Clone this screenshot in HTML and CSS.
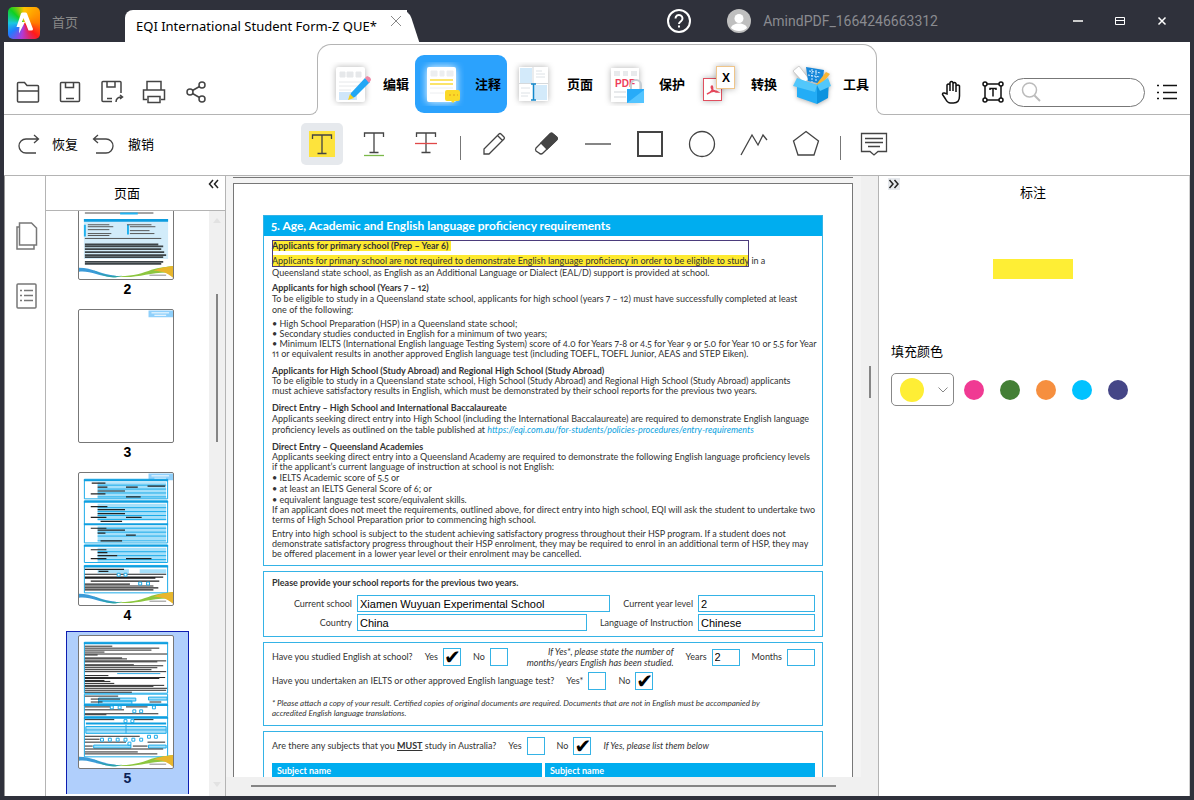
FILE: index.html
```html
<!DOCTYPE html>
<html lang="en">

<head>
    <meta charset="UTF-8">
    <meta name="viewport" content="width=device-width, initial-scale=1.0">
    <title>EQI International Student Form-Z QUE*</title>
    <link rel="stylesheet" href="styles.css">
</head>

<body>
    <!-- Title bar -->
    <header class="titlebar">
        <div class="logo">
            <svg width="32" height="32" viewBox="0 0 32 32">
                <path d="M13 6.500q.5-1 1.500-1h3q1 0 1.500 1L25 22q0 1.500-1.500 1.500h-3L15.500 11l-1.500 4h3L11 26.500l.5-6.500H8.500z" fill="#fff"/>
            </svg>
        </div>
        <button class="home">首页</button>
        <div class="tab">
            <span>EQI International Student Form-Z QUE*</span>
            <button class="tab-close" aria-label="Close tab">
                <svg width="12" height="12" viewBox="0 0 12 12"><path d="M1 1l10 10M11 1L1 11" stroke="#888"/></svg>
            </button>
        </div>
        <div class="account">
            <button aria-label="Help">
                <svg width="26" height="26" viewBox="0 0 26 26" fill="none" stroke="#fff" stroke-width="2">
                    <circle cx="13" cy="13" r="11"/>
                    <path d="M9.500 10.500a3.500 3.500 0 1 1 5.500 2.800c-1.500 1-2 1.400-2 2.700"/>
                    <path d="M13 17.500v2"/>
                </svg>
            </button>
            <svg width="24" height="24" viewBox="0 0 24 24">
                <circle cx="12" cy="12" r="12" fill="#bfbfbf"/>
                <circle cx="12" cy="9.500" r="4.500" fill="#fff"/>
                <path d="M4 19c1-6 15-6 16 0-4 4-12 4-16 0z" fill="#fff"/>
            </svg>
            <span class="user">AmindPDF_1664246663312</span>
        </div>
        <div class="window-buttons">
            <button aria-label="Minimize"><svg width="12" height="12" viewBox="0 0 12 12"><path d="M1 6h10" stroke="#ccc" stroke-width="2"/></svg></button>
            <button aria-label="Maximize"><svg width="12" height="12" viewBox="0 0 12 12"><path d="M1.500 2.500h9v7h-9zM1 5.500h10" stroke="#fff" fill="none"/></svg></button>
            <button aria-label="Close"><svg width="12" height="12" viewBox="0 0 12 12"><path d="M2.500 2.500l7 7M9.500 2.500l-7 7" stroke="#fff" stroke-width="1.500"/></svg></button>
        </div>
    </header>

    <!-- Ribbon -->
    <div class="ribbon">
        <div class="ribbon-side ribbon-left">
            <button aria-label="Open"><svg width="24" height="24" viewBox="0 0 24 24"><path d="M1.500 21V3.500q0-1 1-1h6l2.500 3h10.500q1 0 1 1V21q0 1-1 1h-19q-1 0-1-1zM1.500 11h21"/></svg></button>
            <button aria-label="Save"><svg width="24" height="24" viewBox="0 0 24 24"><path d="M3.500 2.500h17q1 0 1 1v17q0 1-1 1h-17q-1 0-1-1v-17q0-1 1-1zM7.500 2.500v5h8v-5M8 18.500h8"/></svg></button>
            <button aria-label="Save as"><svg width="24" height="24" viewBox="0 0 24 24"><path d="M12 21.500H3q-1 0-1-1v-18q0-1 1-1h17q1 0 1 1V13M7 1.500v5.500h8V1.500M7 18.500h5M16 22c0-4 2-5 6-5M20 15l2.500 2-2.500 2"/></svg></button>
            <button aria-label="Print"><svg width="24" height="24" viewBox="0 0 24 24"><path d="M5 10V1.500h14V10M5 19.500H1.500V10h21v9.500H19M6 16.500h12v6H6z"/></svg></button>
            <button aria-label="Share"><svg width="24" height="24" viewBox="0 0 24 24"><circle cx="6" cy="12" r="3"/><circle cx="18" cy="5" r="3"/><circle cx="18" cy="19" r="3"/><path d="M8.500 10.500l7-4M8.500 13.500l7 4"/></svg></button>
        </div>

        <nav class="modes">
            <button class="mode">
                <svg width="44" height="44" viewBox="0 0 44 44">
                    <rect class="sheet" x="8" y="5" width="29" height="35" rx="2"/>
                    <path d="M12 10h5v5h-5zM19 10h6v5h-6zM28 10h5v5h-5zM11 20h22M11 24h22M11 28h12" fill="#e6e8ea" stroke="#e6e8ea"/>
                    <path d="M11 30h18v8H11z" fill="#cfe6fa"/>
                    <path d="M21 37l2-6 14-15 5 4-15 15z" fill="#22a7f5"/>
                    <path d="M37 16l2-2q4 1 4 4l-2 3z" fill="#ef86a4"/>
                    <path d="M20 38l2-6 4 4z" fill="#f7cf1d"/>
                </svg>
                <span>编辑</span>
            </button>
            <button class="mode active">
                <svg width="44" height="44" viewBox="0 0 44 44">
                    <rect class="sheet glow" x="7" y="5" width="29" height="35" rx="2"/>
                    <path d="M11 9h6v5h-6zM20 9h4v5h-4zM27 9h6v5h-6zM10 26h23M10 31h14" fill="#eceef0" stroke="#eceef0"/>
                    <path d="M10 18h23M10 22h23" stroke="#fbe46a" stroke-width="2"/>
                    <path d="M27 28h11q2 0 2 2v7q0 2-2 2h-3l-2 2-2-2h-4q-2 0-2-2v-7q0-2 2-2z" fill="#fbd928"/>
                    <path d="M29 33h2M33 33h2M37 33h1" stroke="#e09a1c"/>
                </svg>
                <span>注释</span>
            </button>
            <button class="mode">
                <svg width="44" height="44" viewBox="0 0 44 44">
                    <rect class="sheet" x="7" y="5" width="29" height="34"/>
                    <path d="M8 6h12v15H8zM22 23h13v15H22z" fill="#d3eafa"/>
                    <path d="M24 12h9M24 15h9M24 9h6M9 26h9M9 31h9M9 34h7" stroke="#dde2e6"/>
                    <path d="M7 21.500h29M21 5v17" stroke="#d5d9dc"/>
                    <path d="M19 22h5M19 38h5M21.500 22v16" stroke="#1388cc" stroke-width="1.500"/>
                </svg>
                <span>页面</span>
            </button>
            <button class="mode">
                <svg width="44" height="44" viewBox="0 0 44 44">
                    <rect class="sheet" x="7" y="6" width="28" height="34"/>
                    <path d="M10 9h6v5h-6zM19 9h5v5h-5zM27 9h6v5h-6zM10 29h12v2H10zM10 34h12v2H10z" fill="#e8eaec"/>
                    <text x="11" y="25" class="pdf">PDF</text>
                    <path d="M27 28v-5a5 5 0 0 1 10 0v5" fill="none" stroke="#c4ccd2" stroke-width="2"/>
                    <rect x="23" y="27" width="17" height="14" fill="#27abf8"/>
                    <path d="M23 41l17-13v13z" fill="#53c4ff"/>
                </svg>
                <span>保护</span>
            </button>
            <button class="mode">
                <svg width="44" height="44" viewBox="0 0 44 44">
                    <rect class="sheet" x="7.500" y="16.500" width="18" height="22" stroke="#e04f5f"/>
                    <path d="M11 32c4-1 7-5 5-8-2 0 0 6 6 6-3-2-8 0-11 2z" fill="none" stroke="#e8485c" stroke-width="1.500"/>
                    <rect class="sheet" x="20.500" y="4.500" width="18" height="22" stroke="#efc58a"/>
                    <text x="30" y="20" class="xls">X</text>
                </svg>
                <span>转换</span>
            </button>
            <button class="mode">
                <svg width="44" height="44" viewBox="0 0 44 44" class="toolbox">
                    <path d="M5 9l6-5 10 13-5 4z" fill="#fff" stroke="#aaa" stroke-width=".5"/>
                    <path d="M18 5l18 3-2 14-14-3z" fill="#1687d9"/>
                    <path d="M21 9l12 2M20 13l12 2M24 7v13M28 8v12" stroke="#cfeaff" stroke-dasharray="2 1"/>
                    <path d="M27 24L38 10l4 2-11 13z" fill="#f8b533"/>
                    <path d="M9 17l20 6v19L9 35z" fill="#23adf6"/>
                    <path d="M29 23l12-5-1 18-11 6z" fill="#0d93df"/>
                    <path d="M9 16l-4 8 22 6 2-7zM29 23l11-7 3 8-11 5z" fill="#52c7fb"/>
                </svg>
                <span>工具</span>
            </button>
        </nav>

        <div class="ribbon-side ribbon-right">
            <button aria-label="Hand"><svg class="bold" width="24" height="24" viewBox="0 0 24 24"><path d="M7 14V5q1.500-2 3 0v6V2.500q1.500-2 3 0V11V3.500q1.500-2 3 0V12V6q2-2 3.500 0v10q0 7-6 7h-3q-3 0-5-4l-3-4.500q0-2 2-1.500z"/></svg></button>
            <button aria-label="Select text"><svg class="bold" width="24" height="24" viewBox="0 0 24 24"><path d="M6 4h12M6 20h12M4 6v12M20 6v12M9 10V8.500h6V10M12 8.500v8"/><circle cx="4" cy="4" r="2"/><circle cx="20" cy="4" r="2"/><circle cx="4" cy="20" r="2"/><circle cx="20" cy="20" r="2"/></svg></button>
            <label class="search">
                <svg width="20" height="20" viewBox="0 0 20 20"><circle cx="8.500" cy="8" r="7" stroke="#bbb"/><path d="M13.500 13.500l5.500 5.500" stroke="#bbb" stroke-width="2"/></svg>
                <input type="search" aria-label="Search">
            </label>
            <button aria-label="Menu"><svg class="bold" width="22" height="20" viewBox="0 0 22 20"><path d="M7 3.500h14M7 10.500h14M7 16.500h14M1 3.500h2M1 10.500h2M1 16.500h2"/></svg></button>
        </div>
    </div>

    <!-- Annotation tools -->
    <div class="toolbar">
        <div class="history">
            <button><svg width="24" height="22" viewBox="0 0 24 22"><path d="M20 20H10A7 7 0 0 1 10 6h12M18 2l4.500 4-4.500 4"/></svg><span>恢复</span></button>
            <button><svg width="24" height="22" viewBox="0 0 24 22"><path d="M4 20h10a7 7 0 0 0 0-14H2M6 2L1.500 6 6 10"/></svg><span>撤销</span></button>
        </div>
        <div class="tools">
            <button class="tool active" aria-label="Highlight"><svg width="28" height="28" viewBox="0 0 28 28"><path d="M1 1h26v26H1z" fill="#fde33c" stroke="none"/><path d="M4.500 9V5h19v4M14 5v18M9.500 23.500h9"/></svg></button>
            <button class="tool" aria-label="Underline"><svg width="28" height="28" viewBox="0 0 28 28"><path d="M4.500 7V3h19v4M14 3v19M9.500 22.500h9"/><path d="M4 25.500h20" stroke="#7cb94a"/></svg></button>
            <button class="tool" aria-label="Strikeout"><svg width="28" height="28" viewBox="0 0 28 28"><path d="M4.500 7V3h19v4M14 3v19M9.500 22.500h9"/><path d="M3 13.500h22" stroke="#e04848"/></svg></button>
            <span class="divider"></span>
            <button class="tool" aria-label="Pencil"><svg width="28" height="28" viewBox="0 0 28 28"><path d="M4 24v-5L19 4q1-1 2 0l3 3q1 1 0 2L9 24zM17.500 5.500l5 5"/></svg></button>
            <button class="tool" aria-label="Eraser"><svg width="28" height="28" viewBox="0 0 28 28"><path d="M4 18L18 4q1.500-1.500 3 0l3.500 3q1.500 1.500 0 3L11 23q-2 2-4 0l-3-2q-1-1.500 0-3z"/><path d="M9 13l9-9q1.500-1.500 3 0l3.500 3q1.500 1.500 0 3L15 19z" fill="#444"/></svg></button>
            <button class="tool" aria-label="Line"><svg width="28" height="28" viewBox="0 0 28 28"><path d="M1 14h26"/></svg></button>
            <button class="tool" aria-label="Rectangle"><svg width="28" height="28" viewBox="0 0 28 28"><path d="M2 2h24v24H2z" stroke-width="2"/></svg></button>
            <button class="tool" aria-label="Ellipse"><svg width="28" height="28" viewBox="0 0 28 28"><circle cx="14" cy="14" r="12.500"/></svg></button>
            <button class="tool" aria-label="Polyline"><svg width="28" height="28" viewBox="0 0 28 28"><path d="M1 25L12 5l6 10 5-10 4 5"/></svg></button>
            <button class="tool" aria-label="Polygon"><svg width="28" height="28" viewBox="0 0 28 28"><path d="M14 1.500L26.500 11 22 25H6L1.500 11z"/></svg></button>
            <span class="divider"></span>
            <button class="tool" aria-label="Comment"><svg width="28" height="28" viewBox="0 0 28 28"><path d="M1.500 3.500h25v18H18L14 25l-4-3.500H1.500zM5 8.500h18M5 12.500h18M8 16.500h12"/></svg></button>
        </div>
    </div>

    <main class="workspace">
        <aside class="rail">
            <button aria-label="Pages"><svg width="24" height="30" viewBox="0 0 24 30"><path d="M4.500 2h12l5 5v17h-17zM4.500 6H2v22h17v-4"/></svg></button>
            <button aria-label="Outline"><svg width="24" height="30" viewBox="0 0 24 30"><rect x="2" y="3" width="19" height="24" rx="1"/><path d="M9 9.500h9M9 14.500h9M9 19.500h9M5 9.500h2M5 14.500h2M5 19.500h2"/></svg></button>
        </aside>

        <!-- Thumbnails -->
        <section class="pages">
            <div class="pages-head">
                <h2>页面</h2>
                <button class="collapse" aria-label="Collapse"><svg width="12" height="10" viewBox="0 0 12 10"><path d="M5 1L1.500 5 5 9M10 1L6.500 5 10 9"/></svg></button>
            </div>
            <svg class="defs" width="0" height="0">
                <defs>
                    <g id="wave">
                        <path d="M0 123c14 0 22 7 38 8-12 4-26-6-38-4z" fill="#3b9bd8"/>
                        <path d="M34 131c16 2 30-2 40-6 8-3 16-3 22-4v7c-24-2-38 8-62 3z" fill="#8cc63f"/>
                        <path d="M14 125c10 6 20 7 30 6-10 4-20 1-30-6z" fill="#2ba3a8"/>
                        <path d="M76 126c8-4 14-4 20-5v12c-6-5-12-7-20-7z" fill="#e8b62c"/>
                        <path d="M72 130.500h17" stroke="#555" stroke-width=".7"/>
                    </g>
                </defs>
            </svg>
            <div class="pages-body">
                <ol class="thumbs">
                    <li class="thumb">
                        <svg viewBox="0 0 96 134">
                            <path d="M5 6h60M5 20h80M5 40h80M6 67h70" stroke="#444"/>
                            <path d="M5 73h86v41H5z" fill="#d2ecfa"/>
                            <path d="M5 74.500h86" stroke="#0d9ddf" stroke-width="3"/>
                            <path d="M42 67.500h18M6 79v12M50 79v10" stroke="#22b2ef" stroke-width="2"/>
                            <path d="M9 79h22M9 81h26M9 84h22M9 88h24M9 90h22M49 79h25M52 81h26M52 85h20M52 88h25M6 93h78" stroke="#555"/>
                            <path d="M6 99h75M6 101h80M6 104h78M6 107h81M6 110h83M6 112h80M6 117h80M6 119h78" stroke="#3c4347" stroke-width="1.800"/>
                            <use href="#wave"/>
                        </svg>
                        <span>2</span>
                    </li>
                    <li class="thumb">
                        <svg viewBox="0 0 96 134">
                            <path d="M71 0h25v7H71z" fill="#8fd0fb"/>
                            <path d="M74 2.500h18M77 5h12" stroke="#fff"/>
                        </svg>
                        <span>3</span>
                    </li>
                    <li class="thumb">
                        <svg viewBox="0 0 96 134">
                            <path d="M71 0h25v7H71z" fill="#8fd0fb"/>
                            <path d="M74 2.500h18M77 5h12" stroke="#fff"/>
                            <path d="M19 9h70v17H19zM19 31h70v17H19zM19 54h70v15H19zM19 76h70v15H19zM19 98h32v4H19zM62 98h27v4H62z" fill="#a5e0fa"/>
                            <path d="M5.500 6h85v20h-85zM5.500 28h85v43h-85zM5.500 73h85v18h-85zM5.500 94h85v28h-85zM19 12h70M19 16h70M19 20h70M19 24h70M19 35h70M19 39h70M19 43h70M19 47h70M19 56h70M19 60h70M19 64h70M19 69h70M19 80h70M19 84h70M19 88h70" fill="none" stroke="#19aae8"/>
                            <path d="M5 7h86M5 29h86M5 52h86M5 74h86M5 95h86" stroke="#109fdf" stroke-width="2"/>
                            <path d="M13 10h14M19 14h10M48 14h12M70 13h18M19 18h28M12 21h15M48 24h15M12 34h17M19 37h28M19 41h28M12 45h16M48 45h16M22 49h22M12 56h16M19 58h28M19 61h8M48 63h10M22 69h22M12 78h16M19 81h10M19 84h20M12 87h16M48 87h26M6 98h40M20 100h10M6 103h83M6 106h80M6 107h72M12 110h70M6 113h46M6 115h70M6 117h75M6 119h70" stroke="#222" stroke-width="1.200"/>
                            <path d="M39 102h3v3h-3zM46 102h3v3h-3zM61 111h3v3h-3zM69 111h3v3h-3z" fill="#fff" stroke="#19aae8"/>
                            <use href="#wave"/>
                        </svg>
                        <span>4</span>
                    </li>
                    <li class="thumb selected">
                        <svg viewBox="0 0 96 134">
                            <path d="M5.500 6h85v52h-85zM5.500 59h85v10h-85zM5.500 70h85v12h-85zM5.500 83h85v40h-85z" fill="none" stroke="#19aae8"/>
                            <path d="M5 7h86M5 70h86M5 83h86M7 89h82" stroke="#109fdf" stroke-width="2"/>
                            <path d="M6 10h28M6 12h76M6 14h68M6 16h20M6 18h84M6 19h13M6 22h38M6 23h43M6 25h83M6 26h74M6 29h50M6 30h80M6 32h74M6 34h68M6 36h83M6 40h24M6 42h82M6 43h76M6 45h20M6 46h26M6 48h30M6 50h81M6 51h70M6 53h84M6 55h83M6 57h48" stroke="#222" stroke-width="1"/>
                            <path d="M20 63h38v3H20zM71 62h19v3H71zM20 66h34v3H20zM7 92h82v7H7zM15 111h38v3H15zM71 111h18v3H71z" fill="#a5e0fa" stroke="#19aae8"/>
                            <path d="M7 95.500h82M48 90v9M39 38h44" stroke="#2aa8e4"/>
                            <path d="M6 61h34M12 64h30M12 67h12M72 67h12M6 72h26M48 72h22M6 75h40M6 79h75M6 80h22M6 85h30M56 85h20M6 102h56M6 105h15M6 108h42M70 108h18M6 112h8M55 112h15M6 115h80M6 118h54M6 120h74" stroke="#222" stroke-width="1"/>
                            <path d="M32 71h3v3h-3zM40 71h3v3h-3zM75 71h3v3h-3zM55 75h3v3h-3zM62 75h3v3h-3zM46 85h3v3h-3zM53 85h3v3h-3zM22 104h3v3h-3zM30 104h3v3h-3zM38 104h3v3h-3zM46 104h3v3h-3zM54 104h3v3h-3zM62 104h3v3h-3zM70 101h3v3h-3zM77 101h3v3h-3zM50 108h3v3h-3z" fill="#fff" stroke="#19aae8"/>
                            <use href="#wave"/>
                        </svg>
                        <span>5</span>
                    </li>
                </ol>
                <div class="thumbs-scroll">
                    <svg width="10" height="6" viewBox="0 0 10 6"><path d="M1 6l4-5 4 5z" fill="#e2e2e2"/></svg>
                    <i></i>
                    <svg width="10" height="6" viewBox="0 0 10 6"><path d="M1 0l4 5 4-5z" fill="#e2e2e2"/></svg>
                </div>
            </div>
        </section>

        <!-- Document -->
        <section class="viewer">
            <div class="canvas">
                <div class="prev-page"></div>
                <article class="sheet-page">
                    <section class="box">
                        <h1>5. Age, Academic and English language proficiency requirements</h1>
                        <div class="copy">
                            <p class="wide"><span class="picked"><strong><mark>Applicants for primary school (Prep – Year 6)&nbsp;</mark></strong><mark>Applicants for primary school are not required to demonstrate English language proficiency in order to be eligible to study</mark></span> in a<br>
                                Queensland state school, as English as an Additional Language or Dialect (EAL/D) support is provided at school.</p>
                            <h3 class="near">Applicants for high school (Years 7 – 12)</h3>
                            <p class="mid">To be eligible to study in a Queensland state school, applicants for high school (years 7 – 12) must have successfully completed at least<br>
                                one of the following:</p>
                            <p class="gap">• High School Preparation (HSP) in a Queensland state school;<br>
                                • Secondary studies conducted in English for a minimum of two years;<br>
                                • Minimum IELTS (International English language Testing System) score of 4.0 for Years 7-8 or 4.5 for Year 9 or 5.0 for Year 10 or 5.5 for Year<br>
                                11 or equivalent results in another approved English language test (including TOEFL, TOEFL Junior, AEAS and STEP Eiken).</p>
                            <h3>Applicants for High School (Study Abroad) and Regional High School (Study Abroad)</h3>
                            <p>To be eligible to study in a Queensland state school, High School (Study Abroad) and Regional High School (Study Abroad) applicants<br>
                                must achieve satisfactory results in English, which must be demonstrated by their school reports for the previous two years.</p>
                            <h3>Direct Entry – High School and International Baccalaureate</h3>
                            <p class="mid">Applicants seeking direct entry into High School (including the International Baccalaureate) are required to demonstrate English language<br>
                                proficiency levels as outlined on the table published at <a href="https://eqi.com.au/for-students/policies-procedures/entry-requirements">https://eqi.com.au/for-students/policies-procedures/entry-requirements</a></p>
                            <h3>Direct Entry – Queensland Academies</h3>
                            <p>Applicants seeking direct entry into a Queensland Academy are required to demonstrate the following English language proficiency levels<br>
                                if the applicant’s current language of instruction at school is not English:</p>
                            <p class="mid">• IELTS Academic score of 5.5 or<br>
                                • at least an IELTS General Score of 6; or<br>
                                • equivalent language test score/equivalent skills.</p>
                            <p>If an applicant does not meet the requirements, outlined above, for direct entry into high school, EQI will ask the student to undertake two<br>
                                terms of High School Preparation prior to commencing high school.</p>
                            <p class="gap">Entry into high school is subject to the student achieving satisfactory progress throughout their HSP program. If a student does not<br>
                                demonstrate satisfactory progress throughout their HSP enrolment, they may be required to enrol in an additional term of HSP, they may<br>
                                be offered placement in a lower year level or their enrolment may be cancelled.</p>
                        </div>
                    </section>

                    <section class="box form">
                        <h3>Please provide your school reports for the previous two years.</h3>
                        <div class="fields">
                            <label class="lead" for="school">Current school</label>
                            <input id="school" type="text" value="Xiamen Wuyuan Experimental School">
                            <label for="level">Current year level</label>
                            <input id="level" class="short" type="text" value="2">
                        </div>
                        <div class="fields">
                            <label class="lead" for="country">Country</label>
                            <input id="country" type="text" value="China">
                            <label for="language">Language of Instruction</label>
                            <input id="language" class="short" type="text" value="Chinese">
                        </div>
                    </section>

                    <section class="box form">
                        <div class="question">
                            <span>Have you studied English at school?</span>
                            <label>Yes <input type="checkbox" checked></label>
                            <label>No <input type="checkbox"></label>
                            <em class="hint">If Yes*, please state the number of<br>months/years English has been studied.</em>
                            <label>Years <input class="tiny" type="text" value="2"></label>
                            <label>Months <input class="tiny" type="text"></label>
                        </div>
                        <div class="question">
                            <span>Have you undertaken an IELTS or other approved English language test?</span>
                            <label>Yes* <input type="checkbox"></label>
                            <label>No <input type="checkbox" checked></label>
                        </div>
                        <p class="note">* Please attach a copy of your result. Certified copies of original documents are required. Documents that are not in English must be accompanied by<br>accredited English language translations.</p>
                    </section>

                    <section class="box form">
                        <div class="question">
                            <span>Are there any subjects that you <b><u>MUST</u></b> study in Australia?</span>
                            <label>Yes <input type="checkbox"></label>
                            <label>No <input type="checkbox" checked></label>
                            <em>If Yes, please list them below</em>
                        </div>
                        <table class="subjects">
                            <tr><th>Subject name</th><th>Subject name</th></tr>
                        </table>
                    </section>
                </article>
            </div>
            <div class="scroll-y"><i></i></div>
            <div class="scroll-x"><i></i></div>
        </section>

        <!-- Annotation properties -->
        <aside class="props">
            <button class="collapse shaded" aria-label="Expand"><svg width="12" height="10" viewBox="0 0 12 10"><path d="M1.500 1L5 5 1.500 9M6.500 1L10 5 6.500 9"/></svg></button>
            <h2>标注</h2>
            <div class="preview"></div>
            <h4>填充颜色</h4>
            <div class="swatches">
                <button class="current" aria-label="Fill color">
                    <i class="dot yellow"></i>
                    <svg width="10" height="6" viewBox="0 0 10 6"><path d="M.5.5L5 5 9.500.5"/></svg>
                </button>
                <button class="dot pink" aria-label="Pink"></button>
                <button class="dot green" aria-label="Green"></button>
                <button class="dot orange" aria-label="Orange"></button>
                <button class="dot cyan" aria-label="Cyan"></button>
                <button class="dot indigo" aria-label="Indigo"></button>
            </div>
        </aside>
    </main>
</body>

</html>
```
FILE: styles.css
```css
* {
    box-sizing: border-box;
}

body {
    display: flex;
    flex-direction: column;
    height: 100vh;
    margin: 0;
    padding: 0 4px 4px;
    background-color: #2f313b;
    font-family: "Noto Sans", "Noto Sans CJK SC", sans-serif;
    font-size: 13px;
    color: #000;
    overflow: hidden;
}

button {
    display: flex;
    align-items: center;
    justify-content: center;
    padding: 0;
    border: 0;
    background: none;
    font: inherit;
    color: inherit;
}

svg {
    display: block;
    flex-shrink: 0;
}

h1, h2, h3, h4, p, ol {
    margin: 0;
    padding: 0;
}

/* Title bar */
.titlebar {
    display: flex;
    align-items: center;
    flex: 0 0 42px;
}

.logo {
    margin: 4px 12px 0 4px;
    border-radius: 5px;
    background: conic-gradient(from 0deg, #ffc400, #ff7a00 90deg, #ff1a1a 135deg, #b03ad8 190deg, #1f7dff 235deg, #19c8e0 270deg, #10d020 315deg, #ffc400);
}

.home {
    color: #888;
}

.tab {
    position: relative;
    display: flex;
    align-items: center;
    align-self: flex-end;
    justify-content: space-between;
    width: 282px;
    height: 32px;
    margin-left: 47px;
    padding: 0 5px 0 11px;
    border-radius: 8px 0 0 0;
    background-color: #fff;
    white-space: nowrap;
}

.tab::after {
    content: "";
    position: absolute;
    top: 0;
    right: -7px;
    width: 30px;
    height: 32px;
    border-radius: 0 8px 0 0;
    background-color: #fff;
    transform: skewX(18deg);
}

.tab-close {
    z-index: 1;
    align-self: flex-start;
    margin-top: 5px;
}

.account {
    display: flex;
    align-items: center;
    gap: 12px;
    margin-left: auto;
}

.account button {
    margin-right: 23px;
}

.user {
    font-family: Roboto, sans-serif;
    font-size: 14px;
    color: #8a8b90;
}

.window-buttons {
    display: flex;
    gap: 30px;
    margin: 0 22px 0 134px;
}

/* Ribbon */
.ribbon {
    display: flex;
    flex: 0 0 73px;
    background-color: #fff;
}

.ribbon-side {
    display: flex;
    align-items: center;
    flex: 1;
    margin-top: 16px;
    padding-top: 12px;
    border-bottom: 1px solid #b4b4b4;
}

.ribbon-side svg,
.toolbar svg,
.rail svg,
.collapse svg,
.current svg {
    fill: none;
    stroke: #444;
    stroke-width: 1.5;
}

.ribbon-side svg.bold {
    stroke: #111;
}

.ribbon-left {
    gap: 18px;
    padding-left: 12px;
    border-right: 1px solid #b4b4b4;
    border-bottom-right-radius: 8px;
}

.ribbon-right {
    justify-content: flex-end;
    padding-right: 12px;
    border-left: 1px solid #b4b4b4;
    border-bottom-left-radius: 8px;
}

.ribbon-right button:first-child {
    margin-right: 17px;
}

.search {
    display: flex;
    align-items: center;
    width: 136px;
    height: 29px;
    margin: 0 11px 0 4px;
    padding: 0 11px;
    border: 1px solid #777;
    border-radius: 15px;
}

.search input {
    width: 100%;
    border: 0;
    outline: 0;
    background: none;
}

.modes {
    position: relative;
    display: flex;
    padding: 13px 1px 2px 5px;
}

.modes::before {
    content: "";
    position: absolute;
    top: 2px;
    left: -1px;
    right: -1px;
    height: 14px;
    border: 1px solid #b4b4b4;
    border-bottom: 0;
    border-radius: 14px 14px 0 0;
}

.mode {
    gap: 11px;
    justify-content: flex-start;
    width: 92px;
    height: 58px;
    padding-left: 5px;
    border-radius: 9px;
    font-weight: bold;
}

.mode span,
.history span {
    padding-bottom: 2px;
}

.mode.active {
    background-color: #2ba2fd;
}

.mode .sheet {
    fill: #fff;
    filter: drop-shadow(0 0 3px rgba(0, 0, 0, .3));
}

.mode .glow {
    filter: drop-shadow(0 0 4px #fff);
}

.toolbox {
    filter: drop-shadow(0 1px 2px rgba(0, 0, 0, .3));
}

.pdf {
    font: bold 10px "Liberation Sans", sans-serif;
    fill: #ee3d5c;
}

.xls {
    font: bold 12px "Liberation Sans", sans-serif;
    text-anchor: middle;
}

/* Annotation tools */
.toolbar {
    display: grid;
    grid-template-columns: 1fr auto 1fr;
    align-items: center;
    flex: 0 0 61px;
    padding-bottom: 2px;
    border-bottom: 1px solid #b4b4b4;
    background-color: #fff;
}

.toolbar svg {
    stroke-width: 1.3;
}

.history {
    display: flex;
    gap: 14px;
    padding-left: 12px;
}

.history button {
    gap: 12px;
}

.tools {
    display: flex;
    align-items: center;
    gap: 10px;
    padding-left: 2px;
}

.tool {
    width: 42px;
    height: 42px;
    border-radius: 5px;
}

.tool.active {
    background-color: #e6e9ed;
}

.divider {
    width: 6px;
    height: 24px;
    margin-top: 8px;
    background: linear-gradient(#777, #777) center / 1px 100% no-repeat;
}

/* Workspace */
.workspace {
    display: flex;
    flex: 1;
    min-height: 0;
    background-color: #fff;
}

.rail {
    flex: 0 0 42px;
    padding: 45px 0 0 10px;
    border-left: 1px solid #999;
    border-right: 1px solid #b4b4b4;
}

.rail button {
    margin-bottom: 30px;
}

.rail svg {
    stroke: #777;
}

.pages {
    display: flex;
    flex-direction: column;
    flex: 0 0 180px;
    border-right: 1px solid #b4b4b4;
}

.pages-head {
    display: flex;
    flex: 0 0 35px;
    padding-right: 5px;
    border-bottom: 1px solid #b4b4b4;
}

.pages-head h2 {
    flex: 1;
    line-height: 34px;
}

.workspace h2,
.workspace h4 {
    font-size: 13px;
    font-weight: normal;
    text-align: center;
}

.collapse {
    width: 12px;
    height: 16px;
}

.collapse svg {
    stroke: #222;
}

.defs {
    position: absolute;
}

.pages-body {
    display: flex;
    flex: 1;
    min-height: 0;
}

/* List stays scrolled to its end */
.thumbs {
    display: flex;
    flex-direction: column;
    justify-content: flex-end;
    align-items: center;
    flex: 1;
    padding-bottom: 2px;
    overflow: hidden;
    list-style: none;
}

.thumb {
    flex: 0 0 163px;
    width: 123px;
    padding: 4px 12px 0;
    font: bold 14px/18px "Liberation Sans", sans-serif;
    text-align: center;
}

.thumb svg {
    width: 96px;
    height: 134px;
    border: 1px solid #777;
    border-radius: 2px;
    background-color: #fff;
}

.thumb.selected {
    padding: 3px 11px 0;
    border: 1px solid #0d1db0;
    border-bottom: 0;
    background-color: #b0cffc;
}

.thumb.selected span {
    color: #0a2156;
}

.thumbs-scroll {
    display: flex;
    flex-direction: column;
    align-items: center;
    flex: 0 0 16px;
    padding: 6px 0 8px;
    background-color: #f0f0f0;
}

.thumbs-scroll i {
    width: 2px;
    height: 148px;
    margin: 71px 0 auto;
    background-color: #858585;
}

/* Document */
.viewer {
    display: grid;
    grid-template: minmax(0, 1fr) 19px / minmax(0, 1fr) 17px;
    flex: 1;
    min-width: 0;
    background-color: #f0f0f0;
}

.canvas {
    padding: 0 8px 0 7px;
    background-color: #f4f4f4;
    overflow: hidden;
}

.prev-page {
    height: 2px;
    margin-bottom: 5px;
    border-bottom: 1px solid #777;
}

.sheet-page {
    min-height: 700px;
    padding: 31px 29px 0;
    border: 1px solid #777;
    background-color: #fff;
    font-family: Lato, sans-serif;
    font-size: 9px;
    font-variant-numeric: oldstyle-nums proportional-nums;
    line-height: 10px;
    color: #333;
    white-space: nowrap;
}

.box {
    margin-bottom: 5px;
    border: 1px solid #35b3e6;
}

.box h1 {
    padding-left: 7px;
    background-color: #00adef;
    font-size: 12px;
    line-height: 20px;
    color: #fff;
}

.copy {
    padding: 4px 8px 6px;
}

.box h3 {
    margin-top: 6px;
    font-size: 9px;
    line-height: 11px;
}

.box h3.near {
    margin-top: 3px;
}

.copy .wide {
    line-height: 12px;
}

.copy .mid {
    line-height: 11px;
}

.copy .gap {
    margin-top: 4px;
}

.copy a {
    color: #0a9fe0;
    font-style: italic;
    text-decoration: none;
}

.picked {
    display: inline-block;
    outline: 1px solid #4b3b7c;
    outline-offset: -1px;
}

.picked strong {
    display: block;
    margin-bottom: 3px;
}

mark {
    background-color: #feea30;
    color: inherit;
}

.form {
    padding: 5px 7px 3px 8px;
}

.box.form h3 {
    margin: 0 0 6px;
    line-height: 12px;
}

.fields {
    display: flex;
    align-items: center;
    gap: 5px;
    margin-bottom: 2px;
}

.lead {
    width: 80px;
    text-align: right;
}

.form input {
    height: 17px;
    margin: 0;
    border: 1px solid #35b3e6;
    background-color: #fff;
    font: 11px "Liberation Sans", sans-serif;
}

.form input[type="text"] {
    min-width: 0;
    padding: 0 2px;
}

.fields input {
    flex: 1;
    margin-right: 8px;
}

.form .short {
    flex: 0 0 117px;
    margin-right: 0;
}

.question {
    display: flex;
    align-items: center;
    gap: 12px;
    height: 18px;
    margin-bottom: 6px;
}

.question label {
    display: flex;
    align-items: center;
    gap: 5px;
}

.form .tiny {
    width: 28px;
}

.hint {
    flex: 1;
    line-height: 11px;
    text-align: right;
}

.form input[type="checkbox"] {
    appearance: none;
    display: grid;
    place-items: center;
    width: 18px;
    height: 18px;
}

.form input:checked::before {
    content: "✔";
    font: 20px/16px "DejaVu Sans", sans-serif;
    color: #000;
}

.note {
    margin: 8px 0 4px;
    font-size: 8px;
    font-style: italic;
}

.subjects {
    width: calc(100% + 6px);
    margin: 8px -3px 0;
    border-collapse: separate;
    border-spacing: 3px 0;
    table-layout: fixed;
}

.subjects th {
    height: 16px;
    padding: 0 5px;
    background-color: #00adef;
    color: #fff;
    font-size: 9px;
    text-align: left;
}

.scroll-y {
    padding: 190px 8px 0;
}

.scroll-y i {
    display: block;
    width: 2px;
    height: 32px;
    background-color: #858585;
}

.scroll-x {
    grid-column: 1 / 3;
    padding: 8px 42px 0 25px;
}

.scroll-x i {
    display: block;
    height: 2px;
    background-color: #858585;
}

/* Annotation properties */
.props {
    flex: 0 0 312px;
    padding: 0 14px 0 12px;
    border-left: 1px solid #b4b4b4;
    border-right: 1px solid #d0d0d0;
}

.props h2 {
    line-height: 16px;
}

.shaded {
    height: 12px;
    margin: 2px 0 -6px -3px;
    background-color: #e6e9ed;
}

.preview {
    width: 80px;
    height: 20px;
    margin: 59px auto 63px;
    background-color: #feee35;
}

.workspace h4 {
    line-height: 18px;
    text-align: left;
}

.swatches {
    display: flex;
    align-items: center;
    gap: 16px;
    margin-top: 13px;
}

.current {
    justify-content: space-between;
    width: 63px;
    height: 33px;
    margin-right: -6px;
    padding: 0 5px 0 8px;
    border: 1px solid #888;
    border-radius: 5px;
}

.current svg {
    stroke: #888;
    stroke-width: 1;
}

.dot {
    width: 20px;
    height: 20px;
    border-radius: 50%;
}

.current .dot {
    width: 24px;
    height: 24px;
}

.yellow {
    background-color: #feee35;
}

.pink {
    background-color: #f03a93;
}

.green {
    background-color: #437f35;
}

.orange {
    background-color: #f68f3f;
}

.cyan {
    background-color: #00c2ff;
}

.indigo {
    background-color: #454687;
}
```
